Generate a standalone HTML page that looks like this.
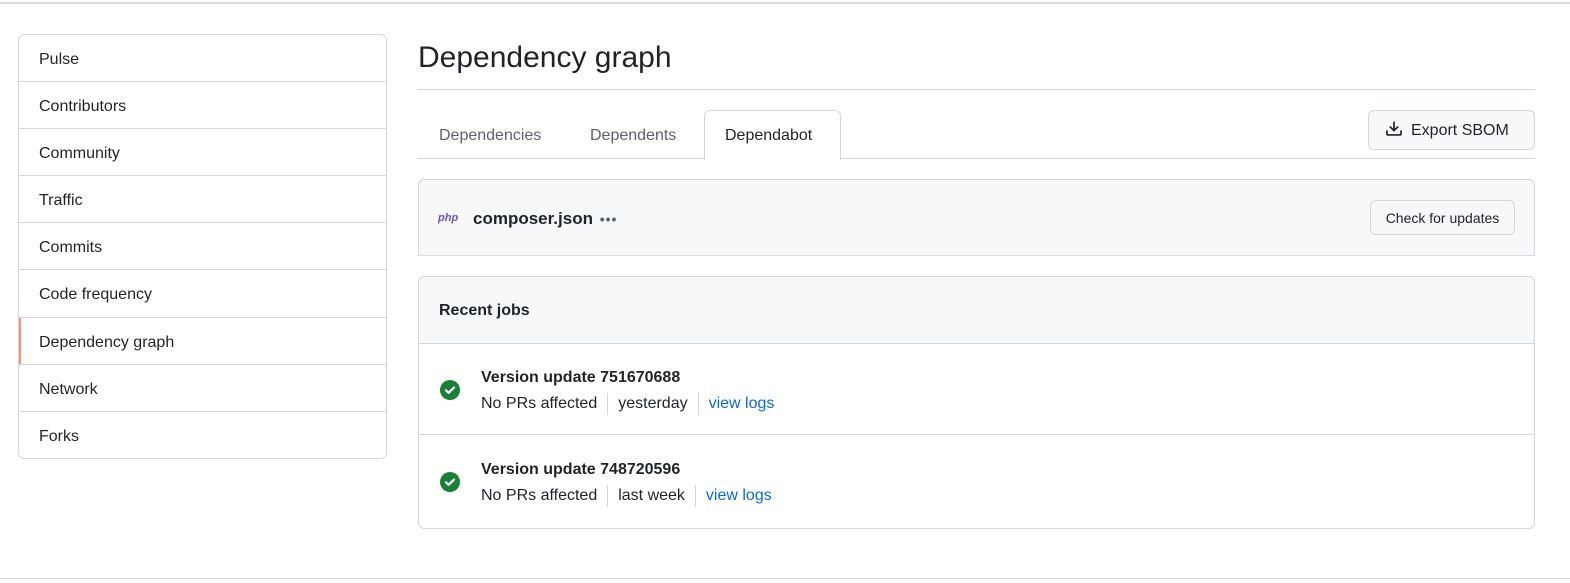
<!DOCTYPE html>
<html><head><style>
*{box-sizing:border-box;margin:0;padding:0}
body{width:1570px;height:583px;background:#fff;font-family:"Liberation Sans",sans-serif;color:#1f2328;position:relative;overflow:hidden}
.abs{position:absolute}
.side{left:18px;top:34px;width:369px;height:425px;border:1px solid #d0d7de;border-radius:6px;overflow:hidden}
.side div{height:47.1px;border-bottom:1px solid #d0d7de;padding-left:20px;line-height:49px;font-size:16px;position:relative}
.side div:last-child{border-bottom:none}
.side .sel::before{content:"";position:absolute;left:0;top:0;bottom:0;width:2px;background:#fd8c73}
.btn{border:1px solid #d0d7de;border-radius:6px;background:#f6f8fa;font-weight:500}
.sep{display:inline-block;width:1px;height:22px;background:#d0d7de;vertical-align:middle;margin:0 10px}
a{color:#0969da;text-decoration:none}
</style></head><body>
<div class="abs" style="left:0;top:2px;width:1570px;height:2px;background:#d8dadd"></div>
<div class="abs" style="left:0;top:578px;width:1570px;height:1px;background:#d8dadd"></div>
<div class="abs side">
<div>Pulse</div><div>Contributors</div><div>Community</div><div>Traffic</div><div>Commits</div><div>Code frequency</div><div class="sel">Dependency graph</div><div>Network</div><div>Forks</div>
</div>
<div class="abs" style="left:418px;top:41px;font-size:30px;">Dependency graph</div>
<div class="abs" style="left:418px;top:89px;width:1117px;height:1px;background:#d0d7de"></div>
<div class="abs" style="left:418px;top:158px;width:1117px;height:1px;background:#d0d7de"></div>
<div class="abs" style="left:704px;top:110px;width:137px;height:50px;border:1px solid #d0d7de;border-bottom:none;border-radius:6px 6px 0 0;background:#fff"></div>
<div class="abs" style="left:439px;top:127px;font-size:16px;color:#59636e">Dependencies</div>
<div class="abs" style="left:590px;top:127px;font-size:16px;color:#59636e">Dependents</div>
<div class="abs" style="left:725px;top:127px;font-size:16px">Dependabot</div>
<div class="abs btn" style="left:1368px;top:110px;width:167px;height:40px;font-size:16px;padding-left:16px;line-height:40px">
<svg width="18" height="18" viewBox="0 0 16 16" style="vertical-align:-3px;margin-right:8px"><path fill="#1f2328" d="M2.75 14A1.75 1.75 0 0 1 1 12.25v-2.5a.75.75 0 0 1 1.5 0v2.5c0 .138.112.25.25.25h10.5a.25.25 0 0 0 .25-.25v-2.5a.75.75 0 0 1 1.5 0v2.5A1.75 1.75 0 0 1 13.25 14ZM7.25 7.689V2a.75.75 0 0 1 1.5 0v5.689l1.97-1.969a.749.749 0 1 1 1.06 1.06l-3.25 3.25a.749.749 0 0 1-1.06 0L4.22 6.78a.749.749 0 1 1 1.06-1.06l1.97 1.969Z"/></svg>Export SBOM</div>
<div class="abs" style="left:418px;top:179px;width:1117px;height:77px;border:1px solid #d0d7de;border-bottom:none;border-radius:6px 6px 0 0;background:#f6f8fa"></div>
<div class="abs" style="left:418px;top:255px;width:1117px;height:1px;background:#d8dde3"></div>
<div class="abs" style="left:438px;top:212px;font-size:11px;font-style:italic;font-weight:bold;color:#6e4fbb">php</div>
<div class="abs" style="left:473px;top:209px;font-size:17px;font-weight:bold">composer.json <span style="color:#59636e;font-size:14px;letter-spacing:1px;margin-left:2px">•••</span></div>
<div class="abs btn" style="left:1370px;top:200px;width:145px;height:35px;font-size:14px;text-align:center;line-height:34px">Check for updates</div>
<div class="abs" style="left:418px;top:276px;width:1117px;height:253px;border:1px solid #d0d7de;border-radius:6px;overflow:hidden">
<div style="height:67px;background:#f6f8fa;border-bottom:1px solid #d0d7de;padding:25px 0 0 20px;font-weight:bold;font-size:16px">Recent jobs</div>
<div style="height:91px;border-bottom:1px solid #d0d7de;position:relative">
<svg class="abs" style="left:21px;top:36px" width="20" height="20" viewBox="0 0 20 20"><circle cx="10" cy="10" r="10" fill="#1a7f37"/><path d="M6 10.3l2.6 2.5L14 7.5" stroke="#fff" stroke-width="2.2" fill="none" stroke-linecap="round" stroke-linejoin="round"/></svg>
<div class="abs" style="left:62px;top:25px;font-size:16px;font-weight:bold">Version update 751670688</div>
<div class="abs" style="left:62px;top:49px;font-size:16px">No PRs affected<span class="sep"></span>yesterday<span class="sep"></span><a>view logs</a></div>
</div>
<div style="height:93px;position:relative">
<svg class="abs" style="left:21px;top:37px" width="20" height="20" viewBox="0 0 20 20"><circle cx="10" cy="10" r="10" fill="#1a7f37"/><path d="M6 10.3l2.6 2.5L14 7.5" stroke="#fff" stroke-width="2.2" fill="none" stroke-linecap="round" stroke-linejoin="round"/></svg>
<div class="abs" style="left:62px;top:26px;font-size:16px;font-weight:bold">Version update 748720596</div>
<div class="abs" style="left:62px;top:50px;font-size:16px">No PRs affected<span class="sep"></span>last week<span class="sep"></span><a>view logs</a></div>
</div>
</div>
</body></html>
